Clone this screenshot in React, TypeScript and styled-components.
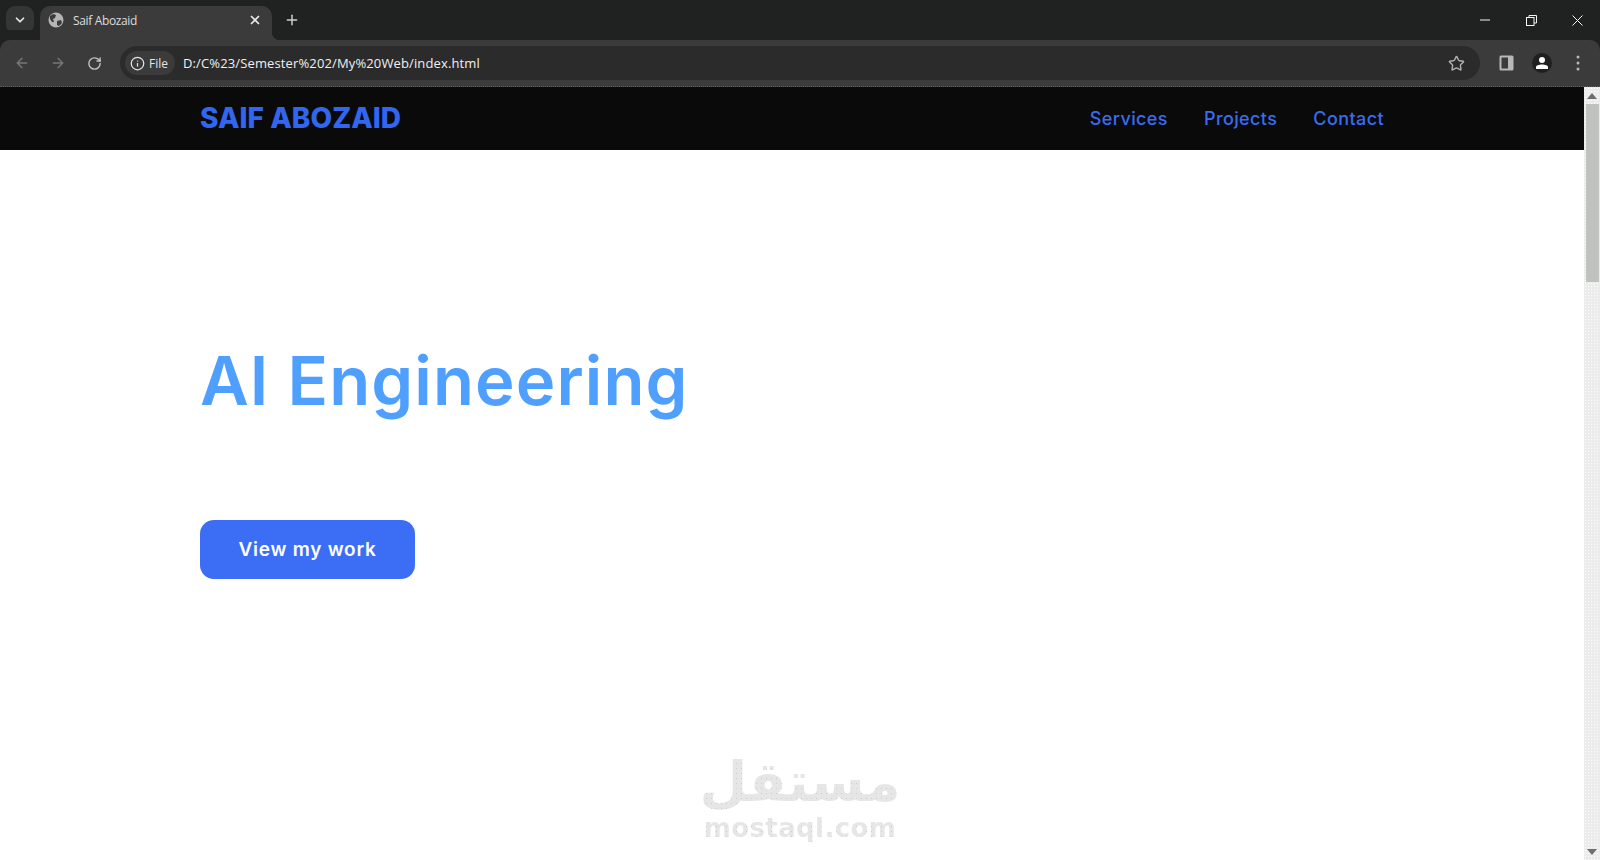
import React from 'react';
import styled, { createGlobalStyle } from 'styled-components';
import {
  ArrowLeft,
  ArrowRight,
  ChevronDown,
  Info,
  Plus,
  RotateCw,
  Star,
  X,
} from 'lucide-react';

const GlobalStyle = createGlobalStyle`
  html, body {
    margin: 0;
    height: 100%;
    overflow: hidden;
    background: #fff;
  }
`;

const Window = styled.div`
  width: 1600px;
  height: 860px;
  position: relative;
  display: flex;
  flex-direction: column;
  overflow: hidden;
  font-family: "Open Sans", "Liberation Sans", sans-serif;
`;

const TabStrip = styled.div`
  height: 40px;
  flex: none;
  display: flex;
  align-items: flex-end;
  background: #202222;
  color: #e8e8e8;
`;

const TabListButton = styled.div`
  width: 28px;
  height: 28px;
  margin: 0 6px 6px 6px;
  border-radius: 9px;
  background: #343636;
  display: flex;
  align-items: center;
  justify-content: center;
`;

const Tab = styled.div`
  width: 232px;
  height: 34px;
  box-sizing: border-box;
  padding: 0 10px 6px 8px;
  position: relative;
  display: flex;
  align-items: center;
  gap: 9px;
  border-radius: 10px 10px 0 0;
  background: #3b3b3b;

  &::after {
    content: '';
    position: absolute;
    right: -8px;
    bottom: 0;
    width: 8px;
    height: 8px;
    background: radial-gradient(circle at 100% 0, transparent 8px, #3b3b3b 8.5px);
  }
`;

const TabTitle = styled.span`
  flex: 1;
  font-size: 12px;
  letter-spacing: -0.35px;
  color: #dcdcdc;
`;

const NewTab = styled.div`
  width: 28px;
  height: 34px;
  margin-left: 6px;
  padding-bottom: 6px;
  box-sizing: border-box;
  display: flex;
  align-items: center;
  justify-content: center;
  color: #d0d0d0;
`;

const WindowControls = styled.div`
  margin-left: auto;
  height: 40px;
  display: flex;
  color: #f4f4f4;
`;

const WindowButton = styled.div`
  width: 46px;
  height: 40px;
  display: flex;
  align-items: center;
  justify-content: center;
`;

const Toolbar = styled.div`
  height: 47px;
  flex: none;
  box-sizing: border-box;
  padding: 6px 0 6px 4px;
  display: flex;
  align-items: center;
  background: #3b3b3b;
  border-radius: 10px 10px 0 0;
  border-bottom: 1px dotted #5c5c5c;
  box-shadow: 0 -10px 0 #202222;
`;

const NavButton = styled.div<{ $dim?: boolean }>`
  width: 36px;
  height: 34px;
  display: flex;
  align-items: center;
  justify-content: center;
  color: ${(p) => (p.$dim ? '#787878' : '#c4c4c4')};
`;

const Omnibox = styled.div`
  width: 1360px;
  height: 34px;
  margin-left: 8px;
  box-sizing: border-box;
  padding: 0 15px 0 5px;
  display: flex;
  align-items: center;
  border-radius: 17px;
  background: #2b2b2b;
`;

const FileChip = styled.div`
  width: 50px;
  height: 24px;
  box-sizing: border-box;
  padding-left: 5px;
  display: flex;
  align-items: center;
  gap: 4px;
  border-radius: 12px;
  background: #3b3b3b;
  color: #e4e4e4;
  font-size: 12px;
`;

const Url = styled.span`
  flex: 1;
  margin-left: 8px;
  font-size: 13px;
  letter-spacing: 0.13px;
  color: #f0f0f0;
`;

const StarIcon = styled.div`
  display: flex;
  color: #b0b0b0;
`;

const ToolbarIcons = styled.div`
  display: flex;
  align-items: center;
  margin-left: 8px;
`;

const ToolbarIconSlot = styled.div`
  width: 36px;
  height: 34px;
  display: flex;
  align-items: center;
  justify-content: center;
`;

const Avatar = styled.div`
  width: 20px;
  height: 20px;
  border-radius: 50%;
  background: #1f1f1f;
  display: flex;
  align-items: center;
  justify-content: center;
`;

const Viewport = styled.div`
  flex: 1;
  min-height: 0;
  display: flex;
`;

const Page = styled.div`
  flex: 1;
  min-width: 0;
  background: #fff;
`;

const Header = styled.header`
  height: 63px;
  box-sizing: border-box;
  padding: 0 200px;
  display: flex;
  align-items: center;
  justify-content: space-between;
  background: #0a0a0a;
`;

const Logo = styled.div`
  margin-bottom: 2px;
  font-family: Inter, "Liberation Sans", sans-serif;
  font-size: 28px;
  font-weight: 800;
  letter-spacing: 0.05px;
  color: #3366ee;
`;

const NavLinks = styled.nav`
  display: flex;
  gap: 36px;
`;

const NavLink = styled.a`
  font-family: Inter, "Liberation Sans", sans-serif;
  font-size: 18px;
  font-weight: 500;
  letter-spacing: 0.4px;
  color: #3a6cf0;
`;

const Hero = styled.section`
  padding: 186px 0 0 200px;
`;

const Title = styled.h1`
  margin: 0;
  font-family: Inter, "Liberation Sans", sans-serif;
  font-size: 67px;
  font-weight: 600;
  line-height: 90px;
  letter-spacing: 1.1px;
  color: #4f9fff;
`;

const CtaButton = styled.button`
  display: block;
  width: 215px;
  height: 59px;
  margin-top: 94px;
  border: none;
  border-radius: 14px;
  background: #3c6ef5;
  color: #fff;
  font-family: Inter, "Liberation Sans", sans-serif;
  font-size: 19px;
  font-weight: 600;
  letter-spacing: 0.75px;
`;

const Scrollbar = styled.div`
  width: 16px;
  flex: none;
  display: flex;
  flex-direction: column;
  align-items: center;
  background-color: #ececec;
  background-image: radial-gradient(circle, #fdfdfd 0.7px, transparent 1px);
  background-size: 3px 3px;
`;

const ScrollArrow = styled.div`
  height: 17px;
  flex: none;
  display: flex;
  align-items: center;
  justify-content: center;
`;

const ScrollThumb = styled.div`
  width: 13px;
  height: 178px;
  flex: none;
  background: #c0c2c0;
`;

const ScrollSpace = styled.div`
  flex: 1;
`;

const Watermark = styled.div`
  position: absolute;
  left: 700px;
  top: 746px;
  width: 200px;
  display: flex;
  flex-direction: column;
  align-items: center;
`;

const dotted = `
  background-color: #e6e6e6;
  background-image: radial-gradient(circle, #cdcdcd 0.8px, transparent 1px);
  background-size: 5px 5px;
  -webkit-background-clip: text;
  background-clip: text;
  color: transparent;
`;

const WatermarkArabic = styled.div`
  font-family: "DejaVu Sans", sans-serif;
  font-size: 55px;
  font-weight: 700;
  line-height: 72px;
  ${dotted}
`;

const WatermarkLatin = styled.div`
  margin-top: -4px;
  font-family: "DejaVu Sans", sans-serif;
  font-size: 26px;
  font-weight: 700;
  line-height: 28px;
  letter-spacing: 0.4px;
  ${dotted}
`;

const GlobeIcon = () => (
  <svg width="16" height="16" viewBox="0 0 16 16">
    <circle cx="8" cy="8" r="7.500" fill="#b4b4b4" />
    <path d="M2 4l3-2 3 1-1 3-2 1 1 3-2 0-2-3zM9 9l4-1 1 3-3 3-2-1z" fill="#3b3b3b" />
  </svg>
);

const MinimizeIcon = () => (
  <svg width="10" height="10" viewBox="0 0 10 10">
    <path d="M0 5h10" stroke="currentColor" strokeWidth="1" />
  </svg>
);

const RestoreIcon = () => (
  <svg width="11" height="11" viewBox="0 0 11 11" fill="none" stroke="currentColor">
    <rect x="0.500" y="2.500" width="7.500" height="8" />
    <path d="M3 2.500V0.500h7.500V8H8" />
  </svg>
);

const CloseIcon = () => (
  <svg width="11" height="11" viewBox="0 0 11 11">
    <path d="M0.500 0.500l10 10M10.500 0.500l-10 10" stroke="currentColor" strokeWidth="1" />
  </svg>
);

const SidePanelIcon = () => (
  <svg width="15" height="16" viewBox="0 0 15 16">
    <rect x="0.500" y="0.500" width="14" height="15" rx="1.500" fill="#b8b8b8" />
    <rect x="2.500" y="2.500" width="6.500" height="11" fill="#3b3b3b" />
  </svg>
);

const PersonIcon = () => (
  <svg width="14" height="14" viewBox="0 0 14 14" fill="#fff">
    <circle cx="7" cy="4" r="3" />
    <path d="M1 13v-2c0-1.500 3-2.500 6-2.500s6 1 6 2.500v2z" />
  </svg>
);

const MenuDots = () => (
  <svg width="4" height="16" viewBox="0 0 4 16" fill="#b8b8b8">
    <circle cx="2" cy="2" r="1.500" />
    <circle cx="2" cy="8" r="1.500" />
    <circle cx="2" cy="14" r="1.500" />
  </svg>
);

const ArrowGlyph = ({ down }: { down?: boolean }) => (
  <svg width="10" height="6" viewBox="0 0 10 6" fill="#6e6e6e">
    <path d={down ? 'M0 0h10L5 6z' : 'M0 6h10L5 0z'} />
  </svg>
);

const App = () => {
  return (
    <Window>
      <GlobalStyle />
      <TabStrip>
        <TabListButton>
          <ChevronDown size={14} strokeWidth={3} />
        </TabListButton>
        <Tab>
          <GlobeIcon />
          <TabTitle>Saif Abozaid</TabTitle>
          <X size={14} strokeWidth={3} />
        </Tab>
        <NewTab>
          <Plus size={16} strokeWidth={2.2} />
        </NewTab>
        <WindowControls>
          <WindowButton>
            <MinimizeIcon />
          </WindowButton>
          <WindowButton>
            <RestoreIcon />
          </WindowButton>
          <WindowButton>
            <CloseIcon />
          </WindowButton>
        </WindowControls>
      </TabStrip>
      <Toolbar>
        <NavButton $dim>
          <ArrowLeft size={16} strokeWidth={2} />
        </NavButton>
        <NavButton $dim>
          <ArrowRight size={16} strokeWidth={2} />
        </NavButton>
        <NavButton>
          <RotateCw size={15} strokeWidth={2.2} />
        </NavButton>
        <Omnibox>
          <FileChip>
            <Info size={15} strokeWidth={2} />
            File
          </FileChip>
          <Url>D:/C%23/Semester%202/My%20Web/index.html</Url>
          <StarIcon>
            <Star size={17} strokeWidth={2} />
          </StarIcon>
        </Omnibox>
        <ToolbarIcons>
          <ToolbarIconSlot>
            <SidePanelIcon />
          </ToolbarIconSlot>
          <ToolbarIconSlot>
            <Avatar>
              <PersonIcon />
            </Avatar>
          </ToolbarIconSlot>
          <ToolbarIconSlot>
            <MenuDots />
          </ToolbarIconSlot>
        </ToolbarIcons>
      </Toolbar>
      <Viewport>
        <Page>
          <Header>
            <Logo>SAIF ABOZAID</Logo>
            <NavLinks>
              <NavLink>Services</NavLink>
              <NavLink>Projects</NavLink>
              <NavLink>Contact</NavLink>
            </NavLinks>
          </Header>
          <Hero>
            <Title>AI Engineering</Title>
            <CtaButton>View my work</CtaButton>
          </Hero>
        </Page>
        <Scrollbar>
          <ScrollArrow>
            <ArrowGlyph />
          </ScrollArrow>
          <ScrollThumb />
          <ScrollSpace />
          <ScrollArrow>
            <ArrowGlyph down />
          </ScrollArrow>
        </Scrollbar>
      </Viewport>
      <Watermark>
        <WatermarkArabic>مستقل</WatermarkArabic>
        <WatermarkLatin>mostaql.com</WatermarkLatin>
      </Watermark>
    </Window>
  );
};

export default App;
